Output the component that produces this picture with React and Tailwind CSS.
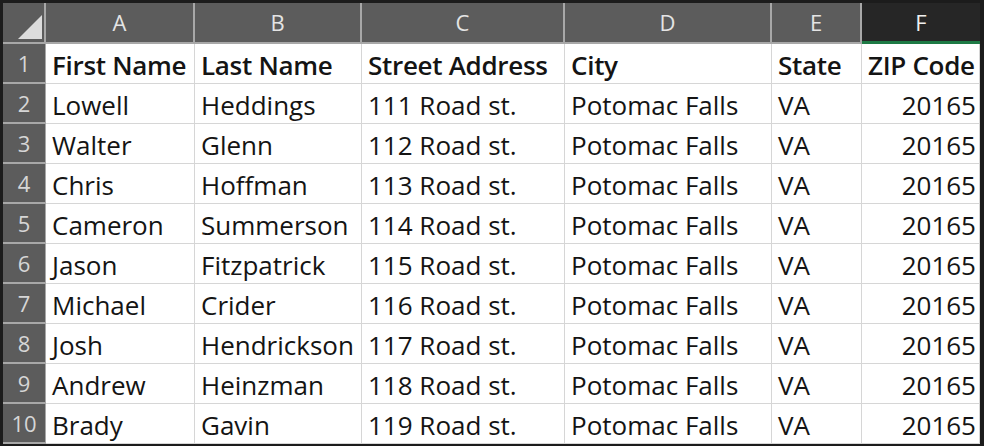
import React from "react";

const cols = ["A", "B", "C", "D", "E", "F"];

const rows = [
  ["Lowell", "Heddings", "111 Road st."],
  ["Walter", "Glenn", "112 Road st."],
  ["Chris", "Hoffman", "113 Road st."],
  ["Cameron", "Summerson", "114 Road st."],
  ["Jason", "Fitzpatrick", "115 Road st."],
  ["Michael", "Crider", "116 Road st."],
  ["Josh", "Hendrickson", "117 Road st."],
  ["Andrew", "Heinzman", "118 Road st."],
  ["Brady", "Gavin", "119 Road st."],
];

const font = { fontFamily: "'Open Sans', Lato, sans-serif" };

function RowHead({ n }) {
  return (
    <div className="h-[40px] flex items-center justify-center bg-[#5c5c5c] border-b-2 border-r border-[#a8a8a8] text-[22px] text-[#d6d6d6]">
      {n}
    </div>
  );
}

function Cell({ children, bold, right }) {
  return (
    <div
      className={`h-[40px] pt-[3px] flex items-center border-b border-r border-[#d6d6d6] bg-white text-[26px] leading-none text-[#141414] whitespace-nowrap overflow-hidden ${
        right ? "justify-end pr-[3px]" : "pl-[6px]"
      } ${bold ? "font-semibold tracking-[-0.3px]" : ""}`}
    >
      {children}
    </div>
  );
}

export default function App() {
  return (
    <div
      className="w-[984px] h-[446px] bg-[#1c1c1c] pt-[3px] pl-[3px] overflow-hidden"
      style={font}
    >
      <div className="grid grid-cols-[43px_149px_167px_203px_207px_90px_118px]">
        {/* corner */}
        <div className="h-[41px] bg-[#5c5c5c] border-r-2 border-b-2 border-[#a8a8a8] relative">
          <svg className="absolute left-[15px] top-[12px]" width="24" height="24" viewBox="0 0 24 24">
            <polygon points="24,0 24,24 0,24" fill="#dcdcdc" />
          </svg>
        </div>
        {cols.map((c) =>
          c === "F" ? (
            <div
              key={c}
              className="h-[41px] flex items-center justify-center bg-[#262626] border-b-[3px] border-[#1e7a45] text-[22px] text-[#f0f0f0]"
            >
              {c}
            </div>
          ) : (
            <div
              key={c}
              className="h-[41px] flex items-center justify-center bg-[#5c5c5c] border-r-2 border-b-2 border-[#a8a8a8] text-[22px] text-[#e4e4e4]"
            >
              {c}
            </div>
          )
        )}

        <RowHead n={1} />
        <Cell bold>First Name</Cell>
        <Cell bold>Last Name</Cell>
        <Cell bold>Street Address</Cell>
        <Cell bold>City</Cell>
        <Cell bold>State</Cell>
        <Cell bold>ZIP Code</Cell>

        {rows.map((r, i) => (
          <React.Fragment key={i}>
            <RowHead n={i + 2} />
            <Cell>{r[0]}</Cell>
            <Cell>{r[1]}</Cell>
            <Cell>{r[2]}</Cell>
            <Cell>Potomac Falls</Cell>
            <Cell>VA</Cell>
            <Cell right>20165</Cell>
          </React.Fragment>
        ))}
      </div>
    </div>
  );
}
